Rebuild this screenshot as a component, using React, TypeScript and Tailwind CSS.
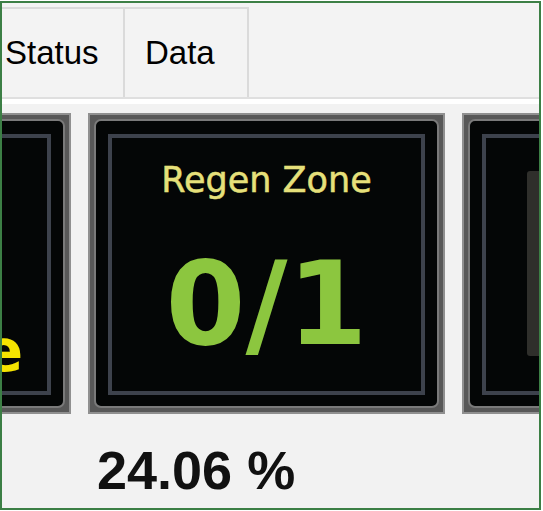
import React from 'react';

function Panel({ children }: { children?: React.ReactNode }) {
  return (
    <div className="w-[357px] h-[301px] shrink-0 bg-[#585858] border-2 border-[#909090] p-[4px]">
      <div className="h-full rounded-[7px] border-2 border-[#7a7a7a] bg-[#040606] px-[12px] pt-[13px] pb-[11px]">
        <div className="h-full border-[4px] border-[#3d424c] bg-[#040606] flex flex-col">
          {children}
        </div>
      </div>
    </div>
  );
}

export default function App() {
  return (
    <div className="w-[543px] h-[511px] bg-white">
      <div
        className="mt-px w-[541px] h-[509px] border-2 border-[#3c7f45] overflow-hidden flex flex-col bg-[#f2f2f2]"
        style={{ fontFamily: '"Liberation Sans", Arial, sans-serif' }}
      >
        {/* tab strip */}
        <div className="h-[96px] shrink-0 pt-[4px] flex border-b-2 border-[#dfdfdf] bg-[#f3f3f3]">
          <div className="-ml-[17px] w-[140px] shrink-0 border-t-2 border-r-2 border-[#dadada] pl-[20px] flex items-center text-[33px] text-black">
            Status
          </div>
          <div className="w-[124px] shrink-0 border-t-2 border-r-2 border-[#dadada] pl-[20px] flex items-center text-[33px] text-black">
            Data
          </div>
        </div>
        <div className="h-[5px] shrink-0 bg-white" />

        <div className="flex-1 pt-[9px]">
          <div className="flex gap-[17px] -ml-[288px]">
            <Panel>
              <div className="flex-1 flex flex-col justify-end items-center pb-[11px]">
                <span
                  className="text-[58px] font-bold leading-none text-[#f5e400]"
                  style={{ fontFamily: '"DejaVu Sans", Verdana, sans-serif' }}
                >
                  Inactive
                </span>
              </div>
            </Panel>
            <Panel>
              <div
                className="flex flex-col items-center pt-[25px]"
                style={{ fontFamily: '"DejaVu Sans", Verdana, sans-serif' }}
              >
                <span className="text-[35px] leading-none text-[#e6e07a] [-webkit-text-stroke:0.5px_#e6e07a]">
                  Regen Zone
                </span>
                <span className="mt-[49px] text-[115px] font-bold leading-none text-[#8cc63f]">0/1</span>
              </div>
            </Panel>
            <Panel>
              <div className="ml-[41px] mt-[33px] w-[227px] h-[185px] rounded-[3px] bg-[#2f2f2b]" />
            </Panel>
          </div>

          <div className="mt-[29px] ml-[95px] text-[54px] font-bold leading-none text-[#111]">24.06 %</div>
        </div>
      </div>
    </div>
  );
}
